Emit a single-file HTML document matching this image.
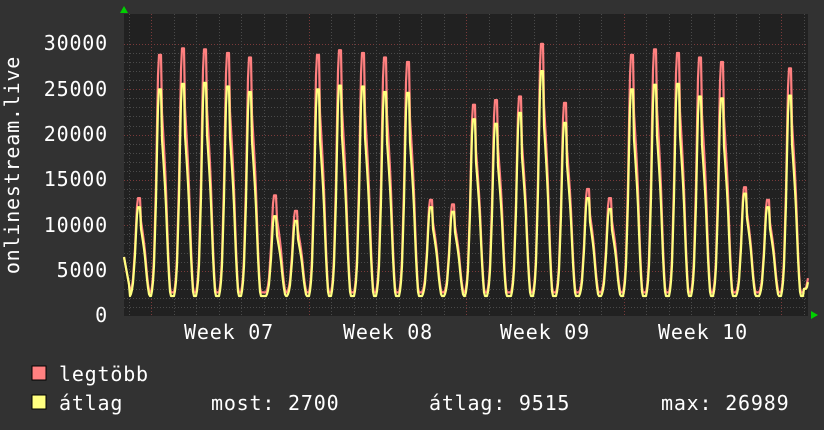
<!DOCTYPE html>
<html><head><meta charset="utf-8"><style>
body{margin:0;background:#323232;width:824px;height:430px;overflow:hidden}
svg{display:block}
text{font-family:"DejaVu Sans Mono","Liberation Mono",monospace;fill:#fff;letter-spacing:0.8px}
</style></head><body>
<svg id="s" width="824" height="430" xmlns="http://www.w3.org/2000/svg">
<rect x="0" y="0" width="824" height="430" fill="#323232"/>
<rect x="124" y="14" width="684" height="302" fill="#212121"/>
<g id="grid"></g>
<path id="red" fill="none" stroke="#ff8080" stroke-width="2.2" stroke-linejoin="round"/>
<path id="yel" fill="none" stroke="#ffff80" stroke-width="2.2" stroke-linejoin="round"/>
<polygon points="120,13 128,13 124,6" fill="#00d000"/>
<polygon points="811,311 811,319 818,315" fill="#00d000"/>
<g font-size="20" text-anchor="end">
<text x="108" y="322">0</text>
<text x="108" y="277">5000</text>
<text x="108" y="232">10000</text>
<text x="108" y="186">15000</text>
<text x="108" y="141">20000</text>
<text x="108" y="96">25000</text>
<text x="108" y="50">30000</text>
</g>
<text x="19" y="165" font-size="20" text-anchor="middle" transform="rotate(-90 19 165)">onlinestream.live</text>
<g font-size="20" text-anchor="middle">
<text x="229" y="339">Week 07</text>
<text x="388" y="339">Week 08</text>
<text x="545" y="339">Week 09</text>
<text x="703" y="339">Week 10</text>
</g>
<rect x="32" y="366" width="14" height="14" fill="#ff8080" stroke="#000" stroke-width="1"/>
<rect x="32" y="395" width="14" height="14" fill="#ffff80" stroke="#000" stroke-width="1"/>
<g font-size="20">
<text x="59" y="381">legtöbb</text>
<text x="59" y="410">átlag</text>
<text x="211" y="410">most: 2700</text>
<text x="429" y="410">átlag: 9515</text>
<text x="661" y="410">max: 26989</text>
</g>
</svg>
<script>
var ns="http://www.w3.org/2000/svg",g=document.getElementById('grid');
function ln(x1,y1,x2,y2,c){var l=document.createElementNS(ns,'line');l.setAttribute('x1',x1);l.setAttribute('y1',y1);l.setAttribute('x2',x2);l.setAttribute('y2',y2);l.setAttribute('stroke',c);l.setAttribute('stroke-dasharray','1,2');g.appendChild(l);}
function Y(v){return 316-v*0.00907;}
for(var v=1000;v<=30000;v+=1000){var y=Math.round(Y(v))+.5;ln(124,y,808,y,v%5000?'#4a4a4a':'#7a3a3a');}
for(var x=151-22.5*1;x<808;x+=22.5){var xx=Math.round(x)+.5;if(xx<124)continue;var r=((xx-151)%157.5+157.5)%157.5;var maj=r<2||r>155.5;ln(xx,14,xx,316,maj?'#7a3a3a':'#4a4a4a');}
var P=[[139,13000,12000],[160,28800,25000],[183,29500,25600],[205,29400,25700],[228,29000,25300],[250,28500,24700],[275,13300,11000],[296,11600,10500],[318,28800,25000],[340,29300,25400],[363,29000,25300],[385,28500,24700],[408,28000,24600],[431,12800,12000],[453,12300,11500],[474,23300,21700],[496,23800,21200],[520,24200,22400],[542,30000,27000],[565,23500,21300],[588,14000,13000],[610,13000,11800],[632,28800,25000],[655,29400,25500],[678,29000,25600],[700,28500,24200],[722,28000,24000],[745,14200,13500],[768,12800,12000],[790,27300,24300],[812,6000,5500]];
var T=[-.38,-.28,-.18,-.1,-.06,.05,.09,.15,.25,.35,.43,.48],S=[0,.1,.45,.88,1,1,.75,.66,.48,.2,.03,0];
function shape(t){if(t<=T[0]||t>=T[T.length-1])return 0;for(var i=1;i<T.length;i++)if(t<=T[i]){var f=(t-T[i-1])/(T[i]-T[i-1]);return S[i-1]+f*(S[i]-S[i-1]);}return 0;}
function build(k,base){var d='';for(var x=124;x<=808;x++){var v=base;for(var j=0;j<P.length;j++){var t=(x-P[j][0])/22.5;v=Math.max(v,base+(P[j][k]-base)*shape(t));}
if(x<130)v=Math.max(v,6500-(x-124)*600);if(x>=804)v=Math.max(v,3000);
d+=(x==124?'M':'L')+x+','+Y(v).toFixed(1);}return d;}
document.getElementById('red').setAttribute('d',build(1,2600));
document.getElementById('yel').setAttribute('d',build(2,2200));
</script>
</body></html>
